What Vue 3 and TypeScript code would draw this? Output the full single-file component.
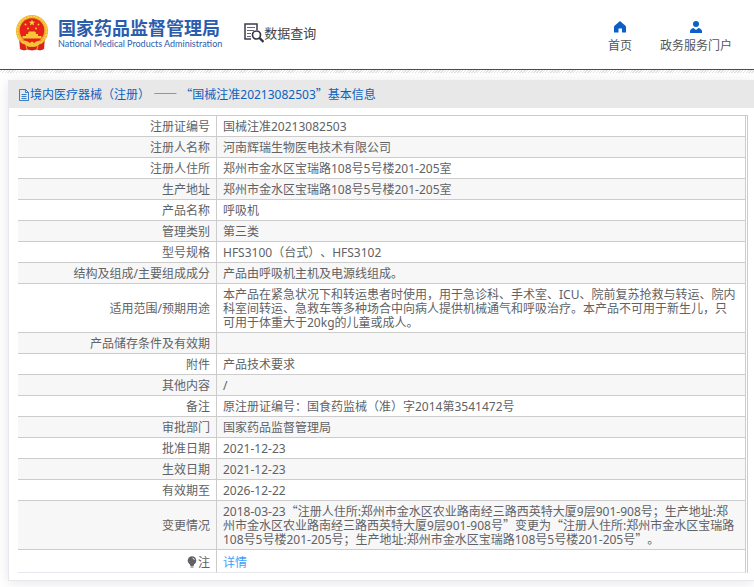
<script setup lang="ts">
interface Row {
  label: string
  value: string
  link?: boolean
}

interface Segment {
  text: string
  wide: boolean
}

const title = '境内医疗器械（注册） —— “国械注准20213082503”基本信息'

const rows: Row[] = [
  { label: '注册证编号', value: '国械注准20213082503' },
  { label: '注册人名称', value: '河南辉瑞生物医电技术有限公司' },
  { label: '注册人住所', value: '郑州市金水区宝瑞路108号5号楼201-205室' },
  { label: '生产地址', value: '郑州市金水区宝瑞路108号5号楼201-205室' },
  { label: '产品名称', value: '呼吸机' },
  { label: '管理类别', value: '第三类' },
  { label: '型号规格', value: 'HFS3100（台式）、HFS3102' },
  { label: '结构及组成/主要组成成分', value: '产品由呼吸机主机及电源线组成。' },
  {
    label: '适用范围/预期用途',
    value:
      '本产品在紧急状况下和转运患者时使用，用于急诊科、手术室、ICU、院前复苏抢救与转运、院内科室间转运、急救车等多种场合中向病人提供机械通气和呼吸治疗。本产品不可用于新生儿，只可用于体重大于20kg的儿童或成人。',
  },
  { label: '产品储存条件及有效期', value: '' },
  { label: '附件', value: '产品技术要求' },
  { label: '其他内容', value: '/' },
  { label: '备注', value: '原注册证编号：国食药监械（准）字2014第3541472号' },
  { label: '审批部门', value: '国家药品监督管理局' },
  { label: '批准日期', value: '2021-12-23' },
  { label: '生效日期', value: '2021-12-23' },
  { label: '有效期至', value: '2026-12-22' },
  {
    label: '变更情况',
    value:
      '2018-03-23“注册人住所:郑州市金水区农业路南经三路西英特大厦9层901-908号；生产地址:郑州市金水区农业路南经三路西英特大厦9层901-908号”变更为“注册人住所:郑州市金水区宝瑞路108号5号楼201-205号；生产地址:郑州市金水区宝瑞路108号5号楼201-205号”。',
  },
  { label: '注', value: '详情', link: true },
]

// Quotes and dashes exist in the Latin font too; split them out so they get full-width glyphs.
function segments(text: string): Segment[] {
  return text
    .split(/([“”—]+)/)
    .filter((part) => part !== '')
    .map((part) => ({ text: part, wide: /^[“”—]/.test(part) }))
}
</script>

<template>
  <div class="page" lang="zh-CN">
    <header class="top">
      <a class="brand" href="#">
        <svg class="emblem" viewBox="0 0 32 36" aria-hidden="true">
          <path d="M3 22h26l-1 12-4 1.500-3-1-5 1-5-1-3 1-4-1.500z" fill="#d8201c" />
          <circle cx="16" cy="16" r="16" fill="#f0b32c" />
          <circle cx="16" cy="16" r="14.500" fill="none" stroke="#f8d254" stroke-width="1.500" stroke-dasharray="2 1" />
          <circle cx="16" cy="15.500" r="12.300" fill="#e5211c" />
          <path d="M16 4.500l.9 2.200 2.400.1-1.900 1.500.7 2.300-2.100-1.300-2.100 1.300.7-2.300-1.900-1.500 2.400-.1z" fill="#fbd23c" />
          <g fill="#f8c535">
            <circle cx="9.500" cy="9.500" r="1" />
            <circle cx="22.500" cy="9.500" r="1" />
            <circle cx="12" cy="13.500" r="1" />
            <circle cx="20" cy="13.500" r="1" />
            <path d="M12 18l1-1.500h6l1 1.500v1h2v2h3.500v2.500h-19V21H10v-2h2z" />
          </g>
          <path d="M4.500 25h23l-2 3.500h-19z" fill="#e5211c" />
          <path d="M4 24.500c4 1.500 8 1 9.500 3.500l2.500-1.500 2.500 1.500c1.500-2.500 5.500-2 9.500-3.500l-2 4c-3 0-5 1-6.500 3l-3.500-1-3.500 1c-1.500-2-3.500-3-6.500-3z" fill="#f6c133" />
          <path d="M4 29l5 .5 1 4.500-5 .5zM28 29l-5 .5-1 4.500 5 .5z" fill="#dc211c" />
          <path d="M10 31l1 3M22 31l-1 3" stroke="#f0b32c" />
        </svg>
        <span class="names">
          <span class="name-cn">国家药品监督管理局</span>
          <span class="name-en">National Medical Products Administration</span>
        </span>
      </a>
      <div class="query">
        <svg viewBox="0 0 20 20" width="20" height="20" aria-hidden="true">
          <path d="M7 16H1V1h12v6" fill="none" stroke="#3c3c4c" stroke-width="1.500" />
          <path d="M3 4.500h8M3 7.500h7M3 10.500h4M3 13.500h4" stroke="#66667a" stroke-width="1.200" />
          <circle cx="12.500" cy="12" r="4" fill="#fff" stroke="#34344a" stroke-width="1.700" />
          <path d="M15.500 15l4 4" stroke="#34344a" stroke-width="2.400" />
        </svg>
        <span>数据查询</span>
      </div>
      <nav class="nav">
        <a href="#">
          <svg viewBox="0 0 12 12" width="12" height="12" aria-hidden="true">
            <path d="M6 0l5.400 4.700q.6.600.6 1.300V11.500H8V7.500H4.500v4H0V6q0-.7.6-1.300z" fill="#0a60c4" />
          </svg>
          <span>首页</span>
        </a>
        <a href="#">
          <svg viewBox="0 0 12 12" width="12" height="12" aria-hidden="true">
            <circle cx="6" cy="3" r="3" fill="#0a60c4" />
            <path d="M0 12V10.500Q0 8 3.500 7L6 9l2.500-2Q12 8 12 10.500V12z" fill="#0a60c4" />
          </svg>
          <span>政务服务门户</span>
        </a>
      </nav>
    </header>
    <div class="hatch"></div>

    <main class="panel">
      <h1 class="panel-title">
        <svg viewBox="0 0 12 12" width="12" height="12" aria-hidden="true">
          <path d="M1.500 .5h6l3 3v8h-9z M7.500 .5v3h3 M3.500 5.500h5 M3.500 7.500h5 M3.500 9.500h5" fill="none" stroke="#0a62c0" stroke-width=".8" />
        </svg>
        <span><span v-for="(s, i) in segments(title)" :key="i" :class="{ wide: s.wide }">{{ s.text }}</span></span>
      </h1>
      <div class="panel-body">
        <table class="info">
          <tbody>
            <tr v-for="row in rows" :key="row.label">
              <th scope="row">
                <svg v-if="row.link" class="bulb" viewBox="0 0 10 12" width="10" height="12" aria-hidden="true">
                  <circle cx="5" cy="4.500" r="4.300" fill="#606266" />
                  <path d="M2.500 7.500h5L6.500 10h-3z M3.500 10.500h3v1h-3z" fill="#606266" />
                  <path d="M5.500 2q1.700.4 2 2" fill="none" stroke="#fff" stroke-width=".8" />
                </svg>{{ row.label }}
              </th>
              <td>
                <a v-if="row.link" href="#">{{ row.value }}</a>
                <template v-else><span v-for="(s, i) in segments(row.value)" :key="i" :class="{ wide: s.wide }">{{ s.text }}</span></template>
              </td>
            </tr>
          </tbody>
        </table>
      </div>
    </main>
  </div>
</template>

<style>
body {
  background: #fff;
}
</style>

<style scoped>
.page {
  font: 12px/14px "Noto Sans", "Noto Sans CJK SC", sans-serif;
  color: #606266;
  padding-bottom: 6px;
  overflow: hidden;
  text-spacing-trim: space-all;
}
a {
  color: inherit;
  text-decoration: none;
}
.top {
  display: flex;
  align-items: center;
  height: 65px;
  padding: 0 22px 4px 16px;
  border-bottom: 1px solid #0a5cab;
}
.brand {
  display: flex;
  align-items: center;
  gap: 10px;
  color: #2b5cad;
}
.emblem {
  width: 32px;
  height: 36px;
}
.names {
  display: flex;
  flex-direction: column;
  padding-top: 2px;
  white-space: nowrap;
}
.name-cn {
  font: bold 18px/20px "Noto Sans CJK SC", sans-serif;
}
.name-en {
  font: 9px/14px Lato, sans-serif;
}
.query {
  display: flex;
  align-items: center;
  margin-left: 22px;
  color: #444;
  font: 13px/20px "Noto Sans CJK SC", sans-serif;
}
.nav {
  display: flex;
  gap: 28px;
  margin-left: auto;
  padding-top: 8px;
}
.nav a {
  display: flex;
  flex-direction: column;
  align-items: center;
  gap: 6px;
  color: #555;
}
.hatch {
  height: 3px;
  background: repeating-linear-gradient(135deg, #fff 0 1px, #e2e2e2 1px 2px);
}
.panel {
  margin: 7px 0 0 8px;
  border-left: 1px solid #e6e8ee;
  border-bottom: 1px solid #e6e8ee;
  box-shadow: 0 2px 12px rgba(0, 0, 0, 0.1);
}
.panel-title {
  display: flex;
  align-items: center;
  height: 26px;
  margin: 0;
  padding: 2px 0 0 9px;
  background: #e8e8e8;
  color: #0a62c0;
  font-size: 12px;
  font-weight: normal;
}
.panel-body {
  padding: 7px 6px 7px 9px;
}
.info {
  width: 100%;
  border-collapse: separate;
  border-spacing: 0;
  border-top: 1px solid #ccc;
  border-right: 1px solid #ccc;
  padding-right: 1px;
}
.info th,
.info td {
  height: 14px;
  padding: 4px 6px 2px;
  border-bottom: 1px solid #ccc;
  border-right: 1px solid #ccc;
  font-weight: normal;
}
.info th {
  width: 186px;
  text-align: right;
}
.info td {
  padding-right: 8px;
}
.info tr:nth-child(even) {
  background: #f7f7f7;
}
.info tr:last-child th,
.info tr:last-child td {
  height: 16px;
  padding-top: 5px;
  padding-bottom: 1px;
  border-bottom-color: #e6e8ee;
}
.info a {
  color: #409eff;
}
.bulb {
  margin-right: 1px;
  vertical-align: -1px;
}
.wide {
  font-family: "Noto Sans CJK SC", sans-serif;
  line-height: 12px;
}
</style>
